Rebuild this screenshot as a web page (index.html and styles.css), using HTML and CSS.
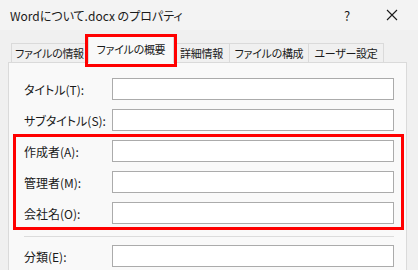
FILE: index.html
```html
<!DOCTYPE html>
<html lang="ja">
<head>
    <meta charset="UTF-8">
    <title>Wordについて.docx のプロパティ</title>
    <link rel="stylesheet" href="styles.css">
</head>
<body>

<div class="window">
    <!-- タイトルバー -->
    <div class="titlebar">
        <span class="title">Wordについて.docx のプロパティ</span>
        <span class="help">?</span>
        <span class="close">
            <svg width="12" height="12" viewBox="0 0 12 12">
                <path d="M1 1 L11 11 M11 1 L1 11" stroke="#1a1a1a" stroke-width="1.1" fill="none"/>
            </svg>
        </span>
    </div>

    <!-- タブ -->
    <div class="tabs">
        <div class="tab t-info">ファイルの情報</div>
        <div class="tab active">ファイルの概要</div>
        <div class="tab t-detail">詳細情報</div>
        <div class="tab t-struct">ファイルの構成</div>
        <div class="tab t-user">ユーザー設定</div>
    </div>

    <!-- 概要パネル -->
    <div class="panel">
        <div class="row"><label>タイトル(T):</label><input type="text"></div>
        <div class="row"><label>サブタイトル(S):</label><input type="text"></div>
        <div class="group">
            <div class="row"><label>作成者(A):</label><input type="text"></div>
            <div class="row"><label>管理者(M):</label><input type="text"></div>
            <div class="row"><label>会社名(O):</label><input type="text"></div>
        </div>
        <div class="sep"></div>
        <div class="row"><label>分類(E):</label><input type="text"></div>
    </div>
</div>

</body>
</html>
```

FILE: styles.css
```css
body {
    margin: 0;
    font-family: "Noto Sans CJK JP", "Noto Sans", sans-serif;
    font-size: 12px;
    color: #1a1a1a;
    background-color: #f0f0f0;
    font-feature-settings: "palt";
}
.window {
    width: 418px;
    height: 270px;
    overflow: hidden;
}
.titlebar {
    height: 30px;
    display: flex;
    align-items: center;
    padding-left: 10px;
    background-color: #f3f3f3;
}
.title {
    flex: 1;
    font-size: 12px;
}
.help {
    width: 14px;
    font-size: 13px;
    margin-right: 28px;
}
.close {
    display: flex;
    margin-right: 20px;
}
.tabs {
    height: 32px;
    display: flex;
    align-items: flex-end;
    margin-left: 11px;
    position: relative;
    z-index: 1;
}
.tab {
    height: 19px;
    line-height: 18px;
    font-size: 11px;
    letter-spacing: -0.3px;
    text-align: center;
    border: 1px solid #dadada;
    border-bottom: none;
    border-left: none;
    box-sizing: border-box;
    background-color: #f0f0f0;
    white-space: nowrap;
}
.t-info {
    width: 77px;
    border-left: 1px solid #dadada;
}
.t-detail {
    width: 56px;
}
.t-struct {
    width: 79px;
}
.t-user {
    width: 75px;
}
.tab.active {
    width: 86px;
    height: 27px;
    line-height: 24px;
    margin-bottom: -1px;
    border-left: 1px solid #dadada;
    background-color: #f9f9f9;
    position: relative;
}
.tab.active::after {
    content: "";
    position: absolute;
    top: -3px;
    left: -4px;
    right: -4px;
    bottom: -4px;
    border: 3px solid #ff0000;
}
.panel {
    margin: 0 11px 0 8px;
    height: 220px;
    box-sizing: border-box;
    padding: 15px 12px 0 15px;
    background-color: #f9f9f9;
    border: 1px solid #dadada;
    display: flex;
    flex-direction: column;
    gap: 9px;
}
.group {
    display: flex;
    flex-direction: column;
    gap: 9px;
    position: relative;
}
.group::after {
    content: "";
    position: absolute;
    top: -6px;
    bottom: -6px;
    left: -11px;
    right: -10px;
    border: 3px solid #ff0000;
}
.row {
    display: flex;
    align-items: center;
    height: 22px;
}
.row label {
    width: 88px;
    flex-shrink: 0;
}
.row input {
    width: 282px;
    height: 22px;
    box-sizing: border-box;
    border: 1px solid #ababab;
    background-color: #fff;
    margin: 0;
}
.sep {
    height: 1px;
    margin: 3px 0 -1px 0;
    background-color: #dcdcdc;
    flex-shrink: 0;
}
```
